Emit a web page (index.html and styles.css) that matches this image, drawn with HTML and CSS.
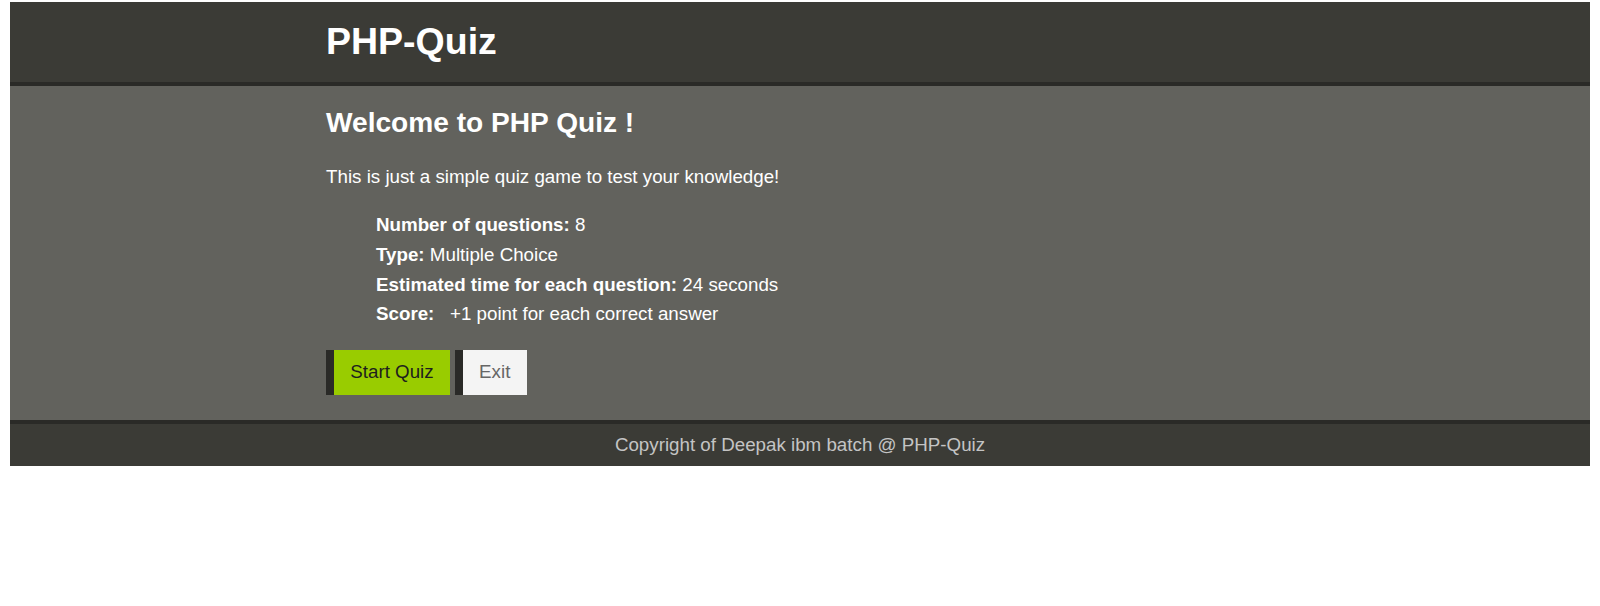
FILE: index.html
```html
<!DOCTYPE html>
<html lang="en">
<head>
<meta charset="utf-8">
<title>PHP-Quiz</title>
<link rel="stylesheet" href="styles.css">
</head>
<body>
  <header class="site-header">
    <div class="container">
      <h1 class="brand">PHP-Quiz</h1>
    </div>
  </header>
  <main class="site-main">
    <div class="container">
      <h2 class="welcome">Welcome to PHP Quiz !</h2>
      <p class="intro">This is just a simple quiz game to test your knowledge!</p>
      <ul class="info">
        <li><strong>Number of questions:</strong> 8</li>
        <li><strong>Type:</strong> Multiple Choice</li>
        <li><strong>Estimated time for each question:</strong> 24 seconds</li>
        <li><strong>Score:</strong> &nbsp; +1 point for each correct answer</li>
      </ul>
      <div class="actions">
        <a href="#" class="btn btn-start">Start Quiz</a>
        <a href="#" class="btn btn-exit">Exit</a>
      </div>
    </div>
  </main>
  <footer class="site-footer">
    <div class="container">Copyright of Deepak ibm batch @ PHP-Quiz</div>
  </footer>
</body>
</html>
```
FILE: styles.css
```css
html, body {
  background: #ffffff;
}
body {
  margin: 2px 10px 0;
  font-family: "Liberation Sans", Arial, sans-serif;
  font-size: 18.75px;
  line-height: 29.7px;
  color: #ffffff;
}
.container {
  width: 60%;
  margin: 0 auto;
}
.site-header {
  background: #3b3b36;
  padding: 19px 0 21px;
  border-bottom: 4px solid #2a2a27;
}
.brand {
  margin: 0;
  font-size: 37.5px;
  line-height: 40px;
  font-weight: bold;
  color: #ffffff;
}
.site-main {
  background: #62625d;
  padding: 21.7px 0 25.3px;
  border-bottom: 4px solid #2a2a27;
}
.welcome {
  margin: 0 0 24.55px;
  font-size: 28.125px;
  font-weight: bold;
}
.intro {
  margin: 0 0 18.7px;
}
.info {
  list-style: none;
  margin: 0 0 20.85px;
  padding: 0 0 0 50px;
}
.actions {
  display: flex;
  gap: 5px;
}
.btn {
  display: block;
  text-decoration: none;
  padding: 7.5px 16.25px;
  border-left: 8.75px solid #2a2a27;
}
.btn-start {
  background: #99cc00;
  color: #1e1e1e;
}
.btn-exit {
  background: #f4f4f4;
  color: #666666;
}
.site-footer {
  background: #3b3b36;
  padding: 6.2px 0;
  text-align: center;
  color: #c4c4c4;
}
```
